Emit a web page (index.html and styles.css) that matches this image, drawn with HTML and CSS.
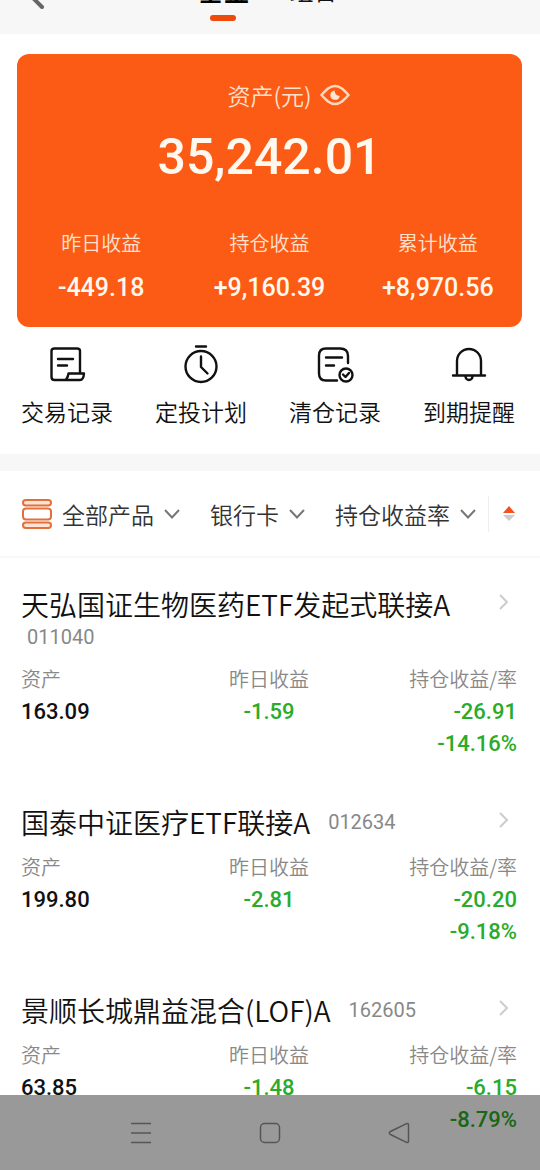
FILE: index.html
```html
<!DOCTYPE html>
<html lang="zh-CN">
<head>
<meta charset="utf-8">
<meta name="viewport" content="width=device-width, initial-scale=1">
<title>基金持仓</title>
<link rel="stylesheet" href="styles.css">
</head>
<body>
<header class="topbar">
  <button class="back" aria-label="返回"><svg width="28" height="32" viewBox="0 0 28 32"><path d="M22 5 11 16 22 27" fill="none" stroke="#666" stroke-width="4" stroke-linecap="round"/></svg></button>
  <nav class="tabs">
    <a class="tab tab-on" href="#fund">基金</a>
    <a class="tab" href="#group">组合</a>
  </nav>
</header>
<main>
  <section class="card">
    <div class="card-label">资产(元)
      <button class="eye" aria-label="隐藏金额"><svg width="30" height="22" viewBox="0 0 30 22"><path d="M1.500 11Q4 8 8 4.500Q15-.5 22 4.500Q26 8 28.500 11Q26 14 22 17.500Q15 22.500 8 17.500Q4 14 1.500 11Z" fill="none" stroke="#ffd9bd" stroke-width="2.400"/><path d="M14.500 6.500A4.700 4.700 0 1 0 19.700 12Q15 11.500 14.500 6.500Z" fill="#ffe6d2"/></svg></button>
    </div>
    <div class="total">35,242.01</div>
    <dl class="stats">
      <div><dt>昨日收益</dt><dd>-449.18</dd></div>
      <div><dt>持仓收益</dt><dd>+9,160.39</dd></div>
      <div><dt>累计收益</dt><dd>+8,970.56</dd></div>
    </dl>
  </section>
  <nav class="actions">
    <a class="action" href="#records"><svg class="action-icon" viewBox="0 0 40 40"><path d="M18 36H7.500Q4.500 36 4.500 33V7Q4.500 4.500 7.500 4.500H30Q33 4.500 33 7V29M11 15H26M11 21.500H20M18 36Q20.500 35 21.500 29.500H37Q36.500 36 33 36Z"/></svg>交易记录</a>
    <a class="action" href="#plan"><svg class="action-icon" viewBox="0 0 40 40"><circle cx="20" cy="22.500" r="15.500"/><path d="M15 2.500H25M20 12.500V23L26.500 29.500"/></svg>定投计划</a>
    <a class="action" href="#cleared"><svg class="action-icon" viewBox="0 0 40 40"><path d="M22 36.500H11Q4 36.500 4 29.500V11.500Q4 4.500 11 4.500H25Q33 4.500 33 12V19M11 13.500H27M11 21.500H19"/><circle cx="31" cy="31" r="6.500"/><path d="M28 30.500 30.500 33 34 29"/></svg>清仓记录</a>
    <a class="action" href="#remind"><svg class="action-icon" viewBox="0 0 40 40"><path d="M8 31V17A12 12 0 0 1 32 17V31M4 31.500H36M16.500 32.500A3.500 3.500 0 0 0 23.500 32.500"/></svg>到期提醒</a>
  </nav>
  <div class="filters">
    <div class="filter-list">
      <button class="filter"><svg class="stack" width="30" height="30" viewBox="0 0 30 30" fill="#fde3d3" stroke="#e0703c" stroke-width="2"><rect x="1" y="1" width="28" height="5.500" rx="2.700"/><rect x="1" y="9.500" width="28" height="11" rx="3" fill="#fff"/><rect x="1" y="23.500" width="28" height="5.500" rx="2.700"/></svg>全部产品<svg class="down" viewBox="0 0 16 10"><path d="M1 1 8 8.500 15 1"/></svg></button>
      <button class="filter">银行卡<svg class="down" viewBox="0 0 16 10"><path d="M1 1 8 8.500 15 1"/></svg></button>
      <button class="filter">持仓收益率<svg class="down" viewBox="0 0 16 10"><path d="M1 1 8 8.500 15 1"/></svg></button>
    </div>
    <button class="sort" aria-label="排序"><svg width="12" height="16" viewBox="0 0 12 16"><path d="M6 0 12 7H0Z" fill="#f4511e"/><path d="M0 9H12L6 15Z" fill="#ccc"/></svg></button>
  </div>
  <article class="fund">
    <a class="fund-head" href="#011040"><h2 class="name">天弘国证生物医药ETF发起式联接A</h2><span class="code">011040</span><svg class="next" viewBox="0 0 10 16"><path d="M1 1 8 8 1 15"/></svg></a>
    <dl class="figures">
      <div><dt>资产</dt><dd class="asset">163.09</dd></div>
      <div><dt>昨日收益</dt><dd>-1.59</dd></div>
      <div><dt>持仓收益/率</dt><dd>-26.91</dd><dd>-14.16%</dd></div>
    </dl>
  </article>
  <article class="fund">
    <a class="fund-head" href="#012634"><h2 class="name">国泰中证医疗ETF联接A</h2><span class="code">012634</span><svg class="next" viewBox="0 0 10 16"><path d="M1 1 8 8 1 15"/></svg></a>
    <dl class="figures">
      <div><dt>资产</dt><dd class="asset">199.80</dd></div>
      <div><dt>昨日收益</dt><dd>-2.81</dd></div>
      <div><dt>持仓收益/率</dt><dd>-20.20</dd><dd>-9.18%</dd></div>
    </dl>
  </article>
  <article class="fund">
    <a class="fund-head" href="#162605"><h2 class="name">景顺长城鼎益混合(LOF)A</h2><span class="code">162605</span><svg class="next" viewBox="0 0 10 16"><path d="M1 1 8 8 1 15"/></svg></a>
    <dl class="figures">
      <div><dt>资产</dt><dd class="asset">63.85</dd></div>
      <div><dt>昨日收益</dt><dd>-1.48</dd></div>
      <div><dt>持仓收益/率</dt><dd>-6.15</dd><dd>-8.79%</dd></div>
    </dl>
  </article>
</main>
<nav class="sysnav">
  <button aria-label="菜单"><svg width="22" height="22" viewBox="0 0 22 22"><path d="M1 1.500H21M1 11H21M1 20.500H21"/></svg></button>
  <button aria-label="主页"><svg width="22" height="22" viewBox="0 0 22 22"><rect x="1.500" y="1.500" width="19" height="19" rx="4"/></svg></button>
  <button aria-label="后退"><svg width="22" height="22" viewBox="0 0 22 22"><path d="M18.500 1.700 2.500 9.500Q0 11 2.500 12.500L18.500 20.300Q20.500 21 20.500 19V3Q20.500 1 18.500 1.700Z"/></svg></button>
</nav>
</body>
</html>
```
FILE: styles.css
```css
* { box-sizing: border-box; }
html { overflow: hidden; }
body {
  margin: 0;
  background: #fff;
  color: #111;
  font-family: "Noto Sans CJK SC", sans-serif;
  font-size: 23px;
  font-weight: 350;
}
button {
  display: flex;
  align-items: center;
  border: 0;
  padding: 0;
  background: none;
  color: inherit;
  font: inherit;
}
a { color: inherit; text-decoration: none; }
dl, dd, h2 { margin: 0; }

.topbar {
  display: flex;
  position: relative;
  justify-content: center;
  align-items: flex-end;
  height: 34px;
  overflow: hidden;
  background: #f7f7f7;
}
.back { position: absolute; left: 20px; bottom: 22px; }
.tabs { display: flex; gap: 40px; padding: 0 5px 13px 0; }
.tab {
  display: flex;
  flex-direction: column;
  align-items: center;
  font-size: 24px;
  line-height: 36px;
}
.tab::after { content: ""; width: 26px; height: 6px; margin-top: 7px; border-radius: 3px; }
.tab-on { font-size: 26px; font-weight: 700; color: #000; }
.tab-on::after { background: #ee4a0c; }

.card {
  margin: 20px 18px 0 17px;
  padding: 23px 0 12px;
  border-radius: 12px;
  background: #fc5b15;
  color: #fff8ee;
  text-align: center;
}
.card-label {
  display: flex;
  justify-content: center;
  align-items: center;
  gap: 8px;
  padding-left: 38px;
  line-height: 36px;
  color: #ffe3cf;
}
.total {
  font-family: Roboto, sans-serif;
  font-size: 50px;
  font-weight: 500;
  line-height: 88px;
}
.stats { display: grid; grid-template-columns: repeat(3, 1fr); margin-top: 24px; }
.stats dt { font-size: 20px; line-height: 36px; color: #ffe3cf; }
.stats dd {
  font-family: Roboto, sans-serif;
  font-size: 25px;
  font-weight: 500;
  line-height: 54px;
}

.actions {
  display: grid;
  grid-template-columns: repeat(4, 1fr);
  padding: 17px 4px 25px 0;
  border-bottom: 17px solid #f7f7f7;
}
.action { display: flex; flex-direction: column; align-items: center; gap: 9px; line-height: 36px; }
.action-icon {
  width: 40px;
  height: 40px;
  fill: none;
  stroke: #111;
  stroke-width: 2.4;
  stroke-linecap: round;
  stroke-linejoin: round;
}

.filters {
  display: flex;
  justify-content: space-between;
  align-items: center;
  height: 87px;
  padding: 0 25px 0 22px;
  border-bottom: 2px solid #f7f7f7;
  color: #333;
}
.filter-list { display: flex; gap: 30px; }
.filter { gap: 10px; white-space: nowrap; }
.down { width: 16px; height: 10px; fill: none; stroke: #777; stroke-width: 2; }
.sort { height: 36px; padding-left: 14px; border-left: 1px solid #eee; }

.fund { padding: 28px 23px 16px 21px; }
.fund-head {
  display: flex;
  position: relative;
  flex-wrap: wrap;
  align-items: center;
  column-gap: 12px;
  padding-right: 40px;
}
.name { font-size: 28px; font-weight: 350; line-height: 36px; }
.code {
  padding-left: 6px;
  font-family: Roboto, sans-serif;
  font-size: 20px;
  font-weight: 400;
  line-height: 30px;
  color: #888;
}
.next {
  position: absolute;
  right: 8px;
  top: 8px;
  width: 10px;
  height: 16px;
  fill: none;
  stroke: #ccc;
  stroke-width: 2;
}
.figures { display: grid; grid-template-columns: 1fr 1fr 1fr; padding-top: 10px; }
.figures div:nth-child(2) { text-align: center; }
.figures div:nth-child(3) { text-align: right; }
.figures dt { font-size: 20px; line-height: 34px; color: #888; }
.figures dd {
  font-family: Roboto, sans-serif;
  font-size: 22px;
  font-weight: 500;
  line-height: 32px;
  color: #2bab2b;
}
.figures .asset { color: #111; }

.sysnav {
  display: flex;
  position: fixed;
  right: 0;
  bottom: 0;
  left: 0;
  justify-content: center;
  gap: 107px;
  height: 75px;
  background: rgba(0, 0, 0, .4);
}
.sysnav svg { fill: none; stroke: #555; stroke-width: 1.5; }
```
